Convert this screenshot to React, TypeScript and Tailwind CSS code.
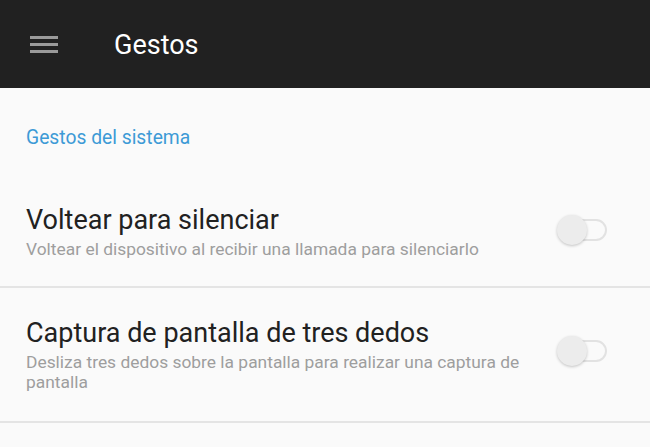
import { Menu } from 'lucide-react';

const ROWS = [
    {
        title: 'Voltear para silenciar',
        desc: 'Voltear el dispositivo al recibir una llamada para silenciarlo',
    },
    {
        title: 'Captura de pantalla de tres dedos',
        desc: 'Desliza tres dedos sobre la pantalla para realizar una captura de pantalla',
    },
];

function Toggle() {
    return (
        <div className="relative w-[50px] h-[30px] flex items-center">
            <div className="ml-[10px] w-[40px] h-[22px] rounded-full border-2 border-[#e2e2e2] bg-[#fafafa]" />
            <div className="absolute left-0 top-0 w-[30px] h-[30px] rounded-full bg-[#ececec] shadow-[0_1px_3px_rgba(0,0,0,0.22)]" />
        </div>
    );
}

export default function App() {
    return (
        <div className="w-[650px] h-[447px] bg-[#fafafa] overflow-hidden" style={{ fontFamily: 'Roboto, "Noto Sans", sans-serif' }}>
            {/* barra superior */}
            <div className="h-[88px] bg-[#212121] flex items-center pl-[28px]">
                <svg width="32" height="22" viewBox="0 0 32 22" className="text-[#9a9a9a]">
                    <rect x="2" y="3" width="28" height="3" fill="currentColor" />
                    <rect x="2" y="10" width="28" height="3" fill="currentColor" />
                    <rect x="2" y="17" width="28" height="3" fill="currentColor" />
                </svg>
                <span className="ml-[54px] mt-[3px] text-[27px] text-white">Gestos</span>
            </div>

            <div className="pl-[26px] pt-[38px] h-[102px] text-[19.3px] leading-[24px] text-[#3d9ad6]">Gestos del sistema</div>

            {ROWS.map((row, i) => (
                <div key={i} className="flex items-start border-b-2 border-[#e4e4e4]">
                    <div className={`flex-1 pl-[26px] pr-[8px] ${i === 0 ? 'pt-[14px] pb-[27px]' : 'pt-[29px] pb-[29px]'}`}>
                        <div className="text-[27px] leading-[32px] text-[#212121]">{row.title}</div>
                        <div className="mt-[3px] text-[17.4px] leading-[20px] text-[#9e9e9e]">{row.desc}</div>
                    </div>
                    <div className={`pr-[43px] ${i === 0 ? 'pt-[25px]' : 'pt-[48px]'}`}>
                        <Toggle />
                    </div>
                </div>
            ))}
        </div>
    );
}
